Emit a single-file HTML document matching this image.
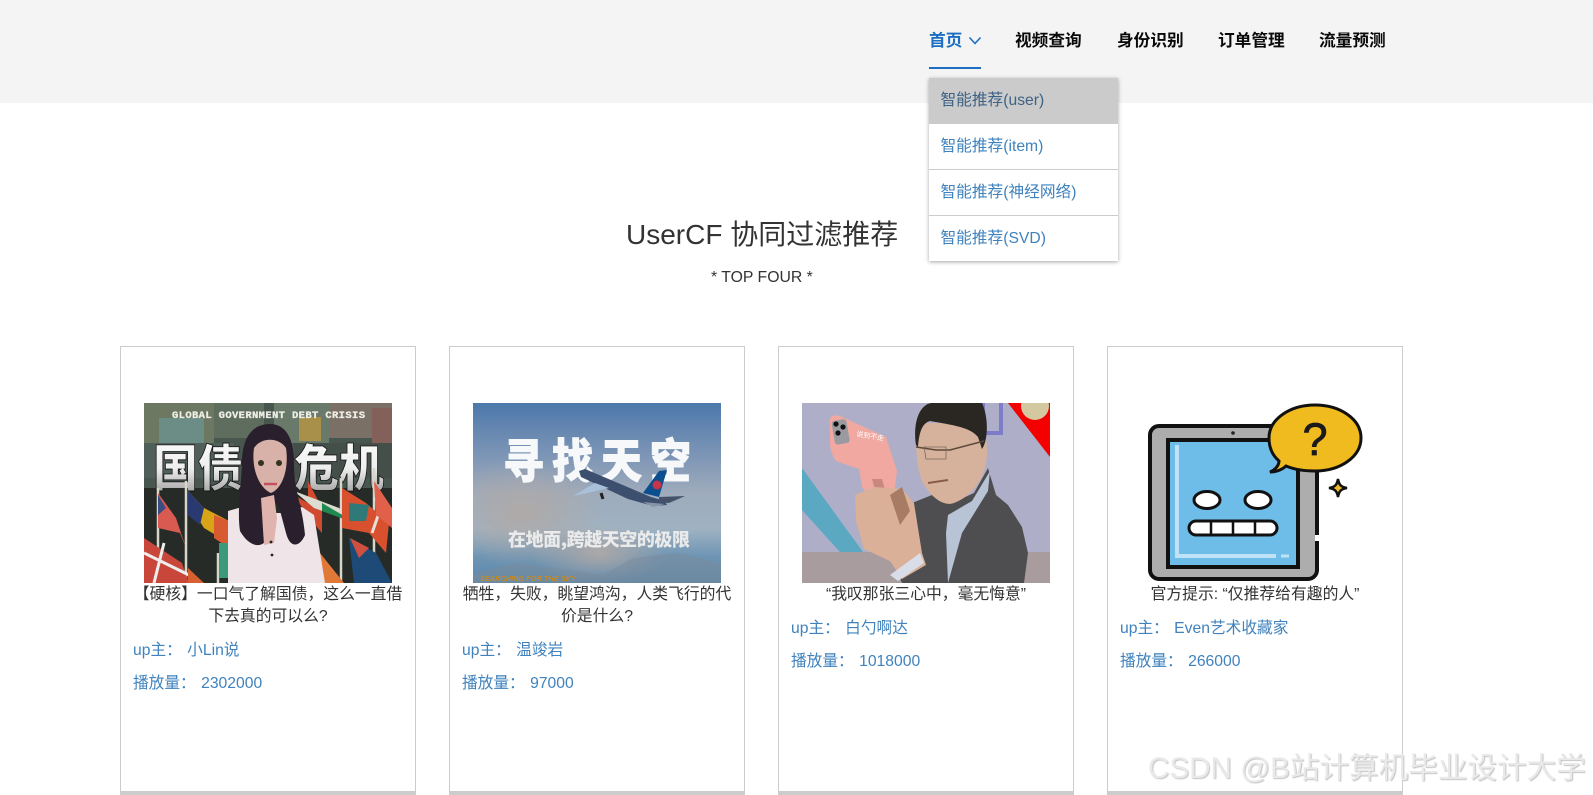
<!DOCTYPE html>
<html lang="zh"><head><meta charset="utf-8"><title>UserCF</title>
<style>
*{box-sizing:border-box;margin:0;padding:0}
html,body{width:1593px;height:795px;overflow:hidden;background:#fff}
body{position:relative;font-family:"Liberation Sans","Noto Sans CJK SC",sans-serif;color:#333;font-size:15.7px}
.a{position:absolute;white-space:nowrap}
.hd{left:0;top:0;width:1593px;height:103px;background:#f4f4f4}
.nav{top:29px;height:24px;line-height:24px;font-size:16.7px;font-weight:700;color:#0a0a0a}
.dd{left:929px;top:78px;width:189px;height:183px;background:#fff;box-shadow:0 1px 4px rgba(0,0,0,.35)}
.dd div{position:absolute;left:0;width:189px;padding-left:11.5px;color:#3f82bd;line-height:46.5px;height:45px;font-size:15.7px}
.card{top:346px;width:296px;height:449px;border:1px solid #ccc;border-bottom:4px solid #ccc;background:#fff}
.card svg{position:absolute;left:23px;top:56px;display:block}
.t{position:absolute;left:11px;width:272px;text-align:center;line-height:22px;font-size:15.8px;color:#333;white-space:normal}
.l{position:absolute;left:12px;color:#3f82bd;line-height:22px;font-size:15.7px;white-space:pre;word-spacing:1px}
.wm{left:1148px;top:751px;font-size:29.6px;line-height:36px;color:#e9e9e9;text-shadow:1px 1px 1px #c4c4c4}
</style></head><body>
<div class="a hd"></div>
<div class="a nav" style="left:929px;color:#1b6ec2">首页</div>
<svg class="a" style="left:968px;top:36px" width="15" height="10" viewBox="0 0 15 10"><path d="M1.5 1.5L7 7.5L12.5 1.5" fill="none" stroke="#1b6ec2" stroke-width="1.6"/></svg>
<div class="a" style="left:929px;top:67px;width:52px;height:2px;background:#1b6ec2"></div>
<div class="a nav" style="left:1015px">视频查询</div>
<div class="a nav" style="left:1117px">身份识别</div>
<div class="a nav" style="left:1218px">订单管理</div>
<div class="a nav" style="left:1319px">流量预测</div>
<div class="a dd">
<div style="top:0;height:46px;line-height:46.5px;background:#cbcbcb;color:#3d6285">智能推荐(user)</div>
<div style="top:46px">智能推荐(item)</div>
<div style="top:91px;height:1px;background:#ccc;padding:0"></div>
<div style="top:92px">智能推荐(神经网络)</div>
<div style="top:137px;height:1px;background:#ccc;padding:0"></div>
<div style="top:138px">智能推荐(SVD)</div>
</div>
<div class="a" style="left:626px;top:215px;font-size:28px;line-height:40px;color:#333">UserCF 协同过滤推荐</div>
<div class="a" style="left:711px;top:267px;font-size:15.8px;line-height:22px;color:#333">* TOP FOUR *</div>

<div class="a card" style="left:120px">
<svg width="248" height="180" viewBox="0 0 248 180">
<defs><linearGradient id="g1" x1="0" y1="0" x2="0" y2="1"><stop offset="0" stop-color="#fff"/><stop offset=".55" stop-color="#eee"/><stop offset="1" stop-color="#8a8a8a"/></linearGradient></defs>
<rect width="248" height="180" fill="#47564f"/>
<rect x="0" y="0" width="70" height="40" fill="#6d7862"/><rect x="15" y="15" width="45" height="25" fill="#6c8d86"/>
<rect x="70" y="0" width="50" height="35" fill="#5f6d5e"/><rect x="130" y="0" width="55" height="40" fill="#6a7a6a"/>
<rect x="155" y="14" width="22" height="24" fill="#a8904a"/><rect x="185" y="0" width="63" height="35" fill="#7a7066"/><rect x="228" y="5" width="20" height="40" fill="#84605a"/>
<rect x="0" y="40" width="90" height="35" fill="#505f59"/><rect x="150" y="40" width="98" height="35" fill="#454f49"/>
<rect y="85" width="248" height="95" fill="#262b28"/>
<text x="28" y="15" font-family="Liberation Mono" font-weight="700" font-size="10.5" fill="#eeeee6" stroke="#eeeee6" stroke-width=".3" textLength="193">GLOBAL GOVERNMENT DEBT CRISIS</text>
<text x="9" y="83" font-family="Noto Sans CJK SC" font-weight="900" font-size="50" fill="url(#g1)" stroke="#111" stroke-width=".8" textLength="90" lengthAdjust="spacingAndGlyphs">国债</text>
<text x="150" y="83" font-family="Noto Sans CJK SC" font-weight="900" font-size="50" fill="url(#g1)" stroke="#111" stroke-width=".8" textLength="90" lengthAdjust="spacingAndGlyphs">危机</text>
<path d="M14 85V180M42 78V180M74 150V180M197 75V180M230 65V180" stroke="#d8d6c8" stroke-width="2.5"/>
<path d="M14 90L32 115L42 145L36 130L14 125Z" fill="#d85a50"/><path d="M14 92L22 105L14 112Z" fill="#3a4c80"/>
<path d="M0 135L38 160L45 180H0Z" fill="#c8473a"/><path d="M0 150L45 172M20 140L10 180" stroke="#eee" stroke-width="3"/>
<path d="M44 88L60 105L85 118V140L60 125L44 100Z" fill="#d8a418"/><path d="M44 88L60 105L56 122L44 112Z" fill="#2a3a70"/><path d="M70 112L85 118V145L70 135Z" fill="#d85a30"/>
<path d="M75 140H85V175H75Z" fill="#3c9a7c"/><path d="M44 165L60 180H44Z" fill="#d86030"/>
<path d="M164 78L178 105L178 130L165 115L150 92L164 100Z" fill="#d04a30"/><path d="M150 88L195 105L212 120L170 105Z" fill="#dcdcd0"/><path d="M178 100L212 120L205 118L178 108Z" fill="#1f8a50"/>
<path d="M198 85L222 100L245 120L242 150L225 130L198 125Z" fill="#d8502e"/><path d="M205 100L225 102L222 118L205 118Z" fill="#2f7a78"/><path d="M230 95L248 112M235 110L228 130" stroke="#e8e0d8" stroke-width="3"/>
<path d="M230 78L248 105V125L232 112Z" fill="#e0604a"/>
<path d="M172 145L200 180H178L172 170Z" fill="#e07838"/>
<path d="M205 135L232 150L248 180H210Z" fill="#1e4a78"/><path d="M206 135L225 145L215 155Z" fill="#d05040"/>
<path d="M84 108L98 104L112 110L140 110L158 104L170 112L181 180H84Z" fill="#efe4e8"/>
<path d="M126 21C106 21 98 38 98 60C97 85 93 108 96 128C104 142 115 146 122 138L122 100H134L142 130C146 146 156 144 161 132C158 100 150 90 150 60C150 36 142 21 126 21Z" fill="#2a1f2c"/>
<path d="M110 45C117 34 135 34 142 45C145 65 139 85 127 90C115 85 107 65 110 45Z" fill="#d8b2a8"/>
<circle cx="117" cy="60" r="3" fill="#332"/><circle cx="135" cy="60" r="3" fill="#332"/>
<path d="M120 81H133" stroke="#c45060" stroke-width="2.5"/>
<path d="M117 95L130 92L133 115L130 140L120 142Z" fill="#e0b4ac"/>
<circle cx="127" cy="139" r="1.4" fill="#222"/><circle cx="128" cy="152" r="1.4" fill="#222"/>
</svg>
<div class="t" style="top:237px">【硬核】一口气了解国债，这么一直借下去真的可以么?</div>
<div class="l" style="top:293px">up主： 小Lin说</div>
<div class="l" style="top:326px">播放量： 2302000</div>
</div>

<div class="a card" style="left:449px">
<svg width="248" height="180" viewBox="0 0 248 180">
<defs>
<linearGradient id="g2" x1="0" y1="0" x2="0" y2="1"><stop offset="0" stop-color="#4d78ab"/><stop offset=".3" stop-color="#7e96b6"/><stop offset=".5" stop-color="#9eabbb"/><stop offset=".7" stop-color="#9fb2c2"/><stop offset=".85" stop-color="#6f95b4"/><stop offset="1" stop-color="#5b86ab"/></linearGradient>
<radialGradient id="g2b"><stop offset="0" stop-color="#b0a9a6" stop-opacity=".95"/><stop offset="1" stop-color="#b0a9a6" stop-opacity="0"/></radialGradient>
</defs>
<rect width="248" height="180" fill="url(#g2)"/>
<ellipse cx="50" cy="110" rx="80" ry="55" fill="url(#g2b)"/>
<ellipse cx="125" cy="150" rx="70" ry="30" fill="url(#g2b)"/>
<path d="M0 172L40 160L90 166L130 172L160 155L205 150L248 160V180H0Z" fill="#7a8c9c" opacity=".55"/>
<text transform="translate(30,75) scale(1,1.15)" font-family="Noto Sans CJK SC" font-weight="900" font-size="41" letter-spacing="8" fill="#f6f8fa" stroke="#f6f8fa" stroke-width=".8">寻找天空</text>
<text x="35" y="143" font-family="Noto Sans CJK SC" font-weight="900" font-size="18" fill="#eaeaea" textLength="182">在地面,跨越天空的极限</text>
<path d="M106 68L112 66L178 94L192 98L194 102L180 103L155 96L108 74Z" fill="#3c4f6e"/>
<path d="M170 90L186 68L194 67L186 94Z" fill="#0c4f8e"/><circle cx="184" cy="82" r="4.5" fill="#c8344a"/>
<path d="M186 94L212 93L196 100L186 99Z" fill="#46526a"/>
<path d="M100 93L122 80L136 85L115 90Z" fill="#a9c0da"/>
<path d="M170 99L192 101L180 104Z" fill="#8893a8"/>
<path d="M128 90L130 96" stroke="#222" stroke-width="3"/>
<text x="7" y="178" font-family="Liberation Sans" font-weight="700" font-style="italic" font-size="7.2" fill="#c88a20" textLength="96">SEARCHING FOR THE SKY</text>
</svg>
<div class="t" style="top:237px">牺牲，失败，眺望鸿沟，人类飞行的代价是什么?</div>
<div class="l" style="top:293px">up主： 温竣岩</div>
<div class="l" style="top:326px">播放量： 97000</div>
</div>

<div class="a card" style="left:778px">
<svg width="248" height="180" viewBox="0 0 248 180">
<rect width="248" height="180" fill="#aeaec8"/>
<path d="M0 65L61 149H38L0 107Z" fill="#5aa8c2"/>
<rect y="149" width="248" height="31" fill="#a89c9e"/>
<path d="M181 -2H199V30H181Z" fill="none" stroke="#7c7cc8" stroke-width="4"/>
<path d="M206 0H248V54Z" fill="#f40000"/><circle cx="233" cy="3" r="14" fill="#d4c8a0"/>
<path d="M28 16Q30 11 38 13L84 34L95 68L92 92L68 94L60 84L57 66L34 58Q28 50 28 40Z" fill="#f0a8a0"/>
<path d="M70 76L80 76L84 90L74 90Z" fill="#c88880"/>
<rect x="31" y="17" width="15" height="24" rx="3" fill="#9a9aa0" transform="rotate(-10 38 28)"/><circle cx="34" cy="21" r="2.6" fill="#111"/><circle cx="41" cy="24" r="2.6" fill="#111"/><circle cx="36" cy="30" r="2.6" fill="#111"/>
<text x="54" y="33" font-family="Noto Sans CJK SC" font-size="7" fill="#fff" transform="rotate(10 54 33)">说到不走</text>
<path d="M110 100L130 92L150 100L172 90L186 65L194 92L206 102L220 124L226 150L222 180H100L95 168L106 140Z" fill="#4e4e50"/>
<path d="M146 112L170 98L188 68L186 88L160 130L146 180L144 130Z" fill="#b8c4d6"/>
<path d="M118 20C112 35 114 62 120 78C128 94 142 104 152 100C168 94 178 80 182 68C188 50 184 32 180 20Z" fill="#d6b29c"/>
<path d="M114 42C110 12 122 0 130 0H180C187 15 186 38 180 46L176 34C168 24 150 22 128 18C120 20 117 30 116 44Z" fill="#2a2622"/>
<path d="M114 44L134 47L148 47L182 38" fill="none" stroke="#5c4a3c" stroke-width="1.5"/>
<path d="M122 44H144V56H124Z" fill="none" stroke="#7a6a5c" stroke-width=".8"/>
<path d="M126 80L146 77" stroke="#8a5a4c" stroke-width="2"/>
<path d="M53 92L72 84L100 86L112 100L116 125L120 150L124 162L100 176L88 158L62 146L54 118Z" fill="#dab098"/>
<path d="M88 92L100 84L108 108L98 122Z" fill="#a87c64"/>
<path d="M88 172L118 150L122 160L96 178Z" fill="#d8dde8"/>
</svg>
<div class="t" style="top:237px">“我叹那张三心中，毫无悔意”</div>
<div class="l" style="top:271px">up主： 白勺啊达</div>
<div class="l" style="top:304px">播放量： 1018000</div>
</div>

<div class="a card" style="left:1107px">
<svg width="248" height="180" viewBox="0 0 248 180">
<rect x="19" y="23" width="167" height="153" rx="9" fill="#adadad" stroke="#111" stroke-width="4"/>
<rect x="37" y="37" width="130" height="127" fill="#6ebde8" stroke="#111" stroke-width="4"/>
<path d="M46 42V153H145" fill="none" stroke="#bfe3f6" stroke-width="4"/><path d="M150 153H158" stroke="#bfe3f6" stroke-width="3"/>
<circle cx="102" cy="30" r="1.8" fill="#222"/>
<ellipse cx="76" cy="97" rx="13" ry="8.5" fill="#fff" stroke="#111" stroke-width="3"/>
<ellipse cx="127" cy="97" rx="13" ry="8.5" fill="#fff" stroke="#111" stroke-width="3"/>
<rect x="58" y="118" width="88" height="14" rx="7" fill="#fff" stroke="#111" stroke-width="3"/>
<path d="M80 118V132M102 118V132M124 118V132" stroke="#111" stroke-width="2.5"/>
<path d="M184 132h5v6h-5z" fill="#fff"/>
<path d="M139 69C146 66 148 61 148 58C141 52 138 44 138 35C138 16 159 2 184 2C209 2 230 16 230 35C230 54 209 68 184 68C170 68 162 66 155 63C152 66 146 69 139 69Z" fill="#f0bb1e" stroke="#111" stroke-width="3"/>
<text x="184" y="52" text-anchor="middle" font-family="Liberation Sans" font-size="45" stroke="#1a1a1a" stroke-width=".8" fill="#1a1a1a">?</text>
<path d="M207 76C208 82 210 84 216 85C210 86 208 88 207 94C206 88 204 86 198 85C204 84 206 82 207 76Z" fill="#f0bb1e" stroke="#111" stroke-width="2.5"/>
</svg>
<div class="t" style="top:237px">官方提示: “仅推荐给有趣的人”</div>
<div class="l" style="top:271px">up主： Even艺术收藏家</div>
<div class="l" style="top:304px">播放量： 266000</div>
</div>

<div class="a wm">CSDN @B站计算机毕业设计大学</div>
</body></html>
